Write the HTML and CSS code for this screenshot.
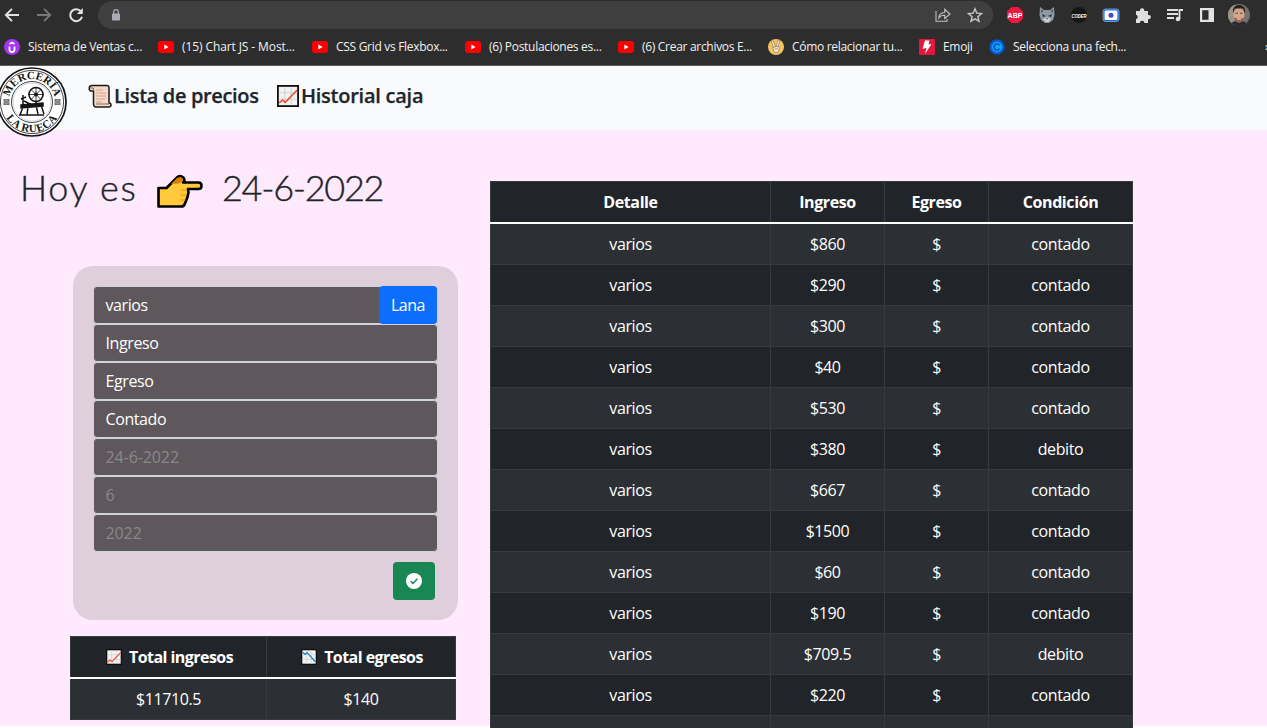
FILE: index.html
```
<!DOCTYPE html>
<html lang="es">
<head>
<meta charset="utf-8">
<title>Mercería La Rueca</title>
<link rel="stylesheet" href="styles.css">
</head>
<body>
<svg class="defs" width="0" height="0">
  <symbol id="yt" viewBox="0 0 16 16"><rect y="2" width="16" height="12" rx="3" fill="#f00"/><path d="M6.3 5.6v4.8L10.6 8z" fill="#fff"/></symbol>
  <symbol id="chart-up" viewBox="0 0 24 24"><rect x="1" y="1" width="22" height="22" fill="#f3f3f3" stroke="#111" stroke-width="2"/><path d="M8.5 2v20M15.5 2v20M2 8.5h20M2 15.5h20" stroke="#d3d3d3" stroke-width="1.2"/><path d="M2.500 19.500l3.500-3 3 2.500L22 5.500" fill="none" stroke="#ee5133" stroke-width="1.800"/></symbol>
  <symbol id="chart-down" viewBox="0 0 24 24"><rect x="1" y="1" width="22" height="22" fill="#f3f3f3" stroke="#111" stroke-width="2"/><path d="M8.5 2v20M15.5 2v20M2 8.5h20M2 15.5h20" stroke="#d3d3d3" stroke-width="1.2"/><path d="M2.500 5l3.500 3 3-2.500L22 19.500" fill="none" stroke="#1684d8" stroke-width="1.900"/></symbol>
</svg>
<header class="browser">
  <div class="toolbar">
    <svg class="nav-icon" viewBox="0 0 16 16"><path d="M15 8H2M8 1.800L1.800 8 8 14.200" fill="none" stroke="#e2e3e5" stroke-width="1.900"/></svg>
    <svg class="nav-icon" viewBox="0 0 16 16"><path d="M1 8h13M8 1.800L14.200 8 8 14.200" fill="none" stroke="#77787a" stroke-width="1.900"/></svg>
    <svg class="nav-icon" viewBox="0 0 16 16"><path d="M13 4.500A6 6 0 1 0 14 9.800" fill="none" stroke="#e2e3e5" stroke-width="2"/><path d="M14.800 1v6H8.800z" fill="#e2e3e5"/></svg>
    <div class="address">
      <svg width="10" height="12" viewBox="0 0 10 12"><rect x="1" y="4.500" width="8" height="7" rx=".8" fill="#a9adb3"/><path d="M2.700 5V3a2.300 2.300 0 0 1 4.600 0v2" fill="none" stroke="#a9adb3" stroke-width="1.200"/></svg>
      <span class="grow"></span>
      <svg width="16" height="16" viewBox="0 0 16 16" fill="none" stroke="#bfc1c3" stroke-width="1.100"><path d="M1 4v10.300h11V12M3.800 11C4 7.500 6 5.700 9.700 5.500V2.300L15 7l-5.300 4.500V8.300C7 8.200 5.200 9 3.800 11z"/></svg>
      <svg width="16" height="16" viewBox="0 0 16 16" fill="none" stroke="#c6c8ca" stroke-width="1.400"><path d="M8 1.800l1.800 4.400 4.700.4-3.600 3.100 1.100 4.600L8 11.800l-4 2.500 1.100-4.600L1.500 6.600l4.700-.4z"/></svg>
    </div>
    <div class="extensions">
      <svg width="18" height="18" viewBox="0 0 18 18"><path d="M5.500 1h7L17 5.500v7L12.500 17h-7L1 12.500v-7z" fill="#ed1740"/><text x="9" y="11.800" class="abp">ABP</text></svg>
      <svg width="18" height="18" viewBox="0 0 18 18"><path d="M2 1l4 3h6l4-3 .5 8-1.500 5-4 3H7l-4-3-1.500-5z" fill="#8d9aa2"/><path d="M3 3l2.500 2L3 7M15 3l-2.500 2L15 7" fill="#4e626c"/><path d="M4 8l4 2-3 1zM14 8l-4 2 3 1z" fill="#293035"/><path d="M5 13l4-2 4 2-2.500 3h-3z" fill="#cad0d3"/><path d="M8 12h2l-1 1.500z" fill="#30383c"/></svg>
      <svg class="coder-icon" width="18" height="18" viewBox="0 0 18 18"><circle cx="9" cy="9" r="8" fill="#171717"/><text x="1.500" y="11.500" class="coder" textLength="15" lengthAdjust="spacingAndGlyphs">CODER</text></svg>
      <svg width="18" height="18" viewBox="0 0 18 18"><rect x="1.800" y="3.700" width="14.400" height="11" rx="2" fill="#fff" stroke="#1666e0" stroke-width="1.500"/><rect x="1" y="3" width="16" height="12.500" rx="2.500" fill="none" stroke="#a9d0ff" stroke-width=".6"/><circle cx="9" cy="9.200" r="2.500" fill="#4c45c5"/></svg>
      <svg width="18" height="18" viewBox="0 0 18 18"><path d="M2 5h4a2.200 2.200 0 1 1 4.200 0H14v4a2.200 2.200 0 1 1 0 4.200V17h-3.600a2.300 2.300 0 0 0-4.600 0H2v-3.900a2.200 2.200 0 0 0 0-4.300z" fill="#dedfe1"/></svg>
      <svg width="18" height="18" viewBox="0 0 18 18"><path d="M1 4h11M1 8h11M1 12h7M17 4h-3.500v9" stroke="#dedfe1" stroke-width="1.800" fill="none"/><circle cx="12" cy="13" r="2.300" fill="#dedfe1"/></svg>
      <svg width="18" height="18" viewBox="0 0 18 18"><path d="M2 2h14v14H2zM4.200 4.200v9.600h6.300V4.200z" fill="#e3e3e3" fill-rule="evenodd"/></svg>
      <svg class="avatar" width="22" height="22" viewBox="0 0 22 22"><defs><clipPath id="av"><circle cx="11" cy="11" r="11"/></clipPath></defs><g clip-path="url(#av)"><path d="M0 0h22v22H0z" fill="#75706a"/><path d="M0 0h7v22H0z" fill="#9b9489"/><path d="M3 22c0-5 4-5 8-5s8 1 9 5z" fill="#272938"/><ellipse cx="11" cy="11" rx="5.500" ry="7.500" fill="#d3a58e"/><path d="M5 9c-1-6 3-8 6-8s7 2 6 8l-2-4.500H7z" fill="#2a211e"/><path d="M7.500 9.300h2.500M12 9.300h2.500" stroke="#6b4437" stroke-width="1"/><path d="M6 13.500l3 1h4l3-1c-.5 3.500-2 5-5 5s-4.500-1.500-5-5z" fill="#8d6451"/><path d="M9 15.200h4" stroke="#f0d3c6"/></g></svg>
    </div>
  </div>
  <nav class="bookmarks">
    <a class="bm bm-a"><svg viewBox="0 0 16 16"><circle cx="8" cy="8" r="8" fill="#a435f0"/><path d="M5.500 7.500v3a2.500 2.500 0 0 0 5 0v-3M5.500 5L8 3.500 10.500 5" fill="none" stroke="#fff" stroke-width="1.800"/></svg><span>Sistema de Ventas c...</span></a>
    <a class="bm bm-b"><svg><use href="#yt"/></svg><span>(15) Chart JS - Most...</span></a>
    <a class="bm bm-c"><svg><use href="#yt"/></svg><span>CSS Grid vs Flexbox...</span></a>
    <a class="bm bm-d"><svg><use href="#yt"/></svg><span>(6) Postulaciones es...</span></a>
    <a class="bm bm-e"><svg><use href="#yt"/></svg><span>(6) Crear archivos E...</span></a>
    <a class="bm bm-f"><svg viewBox="0 0 16 16"><circle cx="8" cy="8" r="8" fill="#f2c45c"/><path d="M4.700 3l1.800 5M10.500 2.500L9 8" stroke="#8b6c53" stroke-width="2.600" stroke-linecap="round"/><path d="M4.700 3l1.800 5M10.500 2.500L9 8" stroke="#f6e0c7" stroke-width="1.600" stroke-linecap="round"/><path d="M4.500 8.500l6-1.500 1 2-1.500 4.500H6.500z" fill="#f6e0c7" stroke="#8b6c53" stroke-width=".6"/><path d="M7 10l3-1" stroke="#8b6c53" stroke-width=".6"/></svg><span>Cómo relacionar tu...</span></a>
    <a class="bm bm-g"><svg viewBox="0 0 16 16"><rect width="16" height="16" rx="1" fill="#e1193f"/><path d="M6 1.500h4.500L9.500 5.500l3-.5L6 15l1.500-6-4 .8z" fill="#fff"/></svg><span>Emoji</span></a>
    <a class="bm bm-h"><svg viewBox="0 0 16 16"><circle cx="8" cy="8" r="7.200" fill="#0a67e8" stroke="#084fab" stroke-width="1.400" stroke-dasharray="3 1"/><circle cx="8" cy="8" r="5" fill="#0ba7f5"/><path d="M10.500 6.200a3 3 0 1 0 0 3.600" stroke="#084bc3" stroke-width="1.600" fill="none"/></svg><span>Selecciona una fech...</span></a>
    <span class="more">»</span>
  </nav>
</header>
<nav class="navbar">
  <svg class="logo" viewBox="0 0 70 70">
    <defs><path id="arc-top" d="M12 35a23 23 0 0 1 46 0"/><path id="arc-bottom" d="M4.800 35a30.200 30.200 0 0 0 60.400 0"/></defs>
    <circle cx="35" cy="35" r="34" fill="#fff" stroke="#151515" stroke-width="1.700"/><circle cx="35" cy="35" r="31.600" fill="none" stroke="#151515" stroke-width=".8"/><circle cx="35" cy="35" r="20.500" fill="none" stroke="#151515" stroke-width=".8"/><circle cx="35" cy="35" r="19" fill="none" stroke="#999" stroke-width=".4"/>
    <text class="logo-text top"><textPath href="#arc-top" startOffset="50%">MERCERÍA</textPath></text>
    <text class="logo-text bottom"><textPath href="#arc-bottom" startOffset="50%">LA RUECA</textPath></text>
    <g fill="#aaa" stroke="#555" stroke-width=".7"><path d="M7 32.500h5v5H7zM58 32.500h5v5h-5z"/><path d="M6.500 32l6 6M12.500 32l-6 6M57.500 32l6 6M63.500 32l-6 6"/></g>
    <circle cx="39" cy="27.500" r="7" fill="none" stroke="#151515" stroke-width="1.600"/><circle cx="39" cy="27.500" r="2" fill="#151515"/><path d="M39 20v15M31.500 27.500h15M34 22.500l10 10M44 22.500l-10 10" stroke="#151515" stroke-width=".8"/>
    <path d="M24 38l22-2v3l-22 2zM26 40l-3 8M44 38l3 9M31 39l-1 9M39 38l2 9M22 48h25M26 28v11M24 32l5-2M27 34l8 4M39 34v5" fill="#151515" stroke="#151515" stroke-width="1.500"/>
  </svg>
  <a class="nav-link link-a"><svg viewBox="0 0 24 24"><path d="M4 1.500h15c2.500 0 2 3 2 4V19c1.500 0 2 .5 2 2s-1 2-2.500 2H8c-2 0-2.500-1.500-2.500-3.500V7H2.500C.5 6 .5 1.500 4 1.500z" fill="#f5d8c5" stroke="#1a1a1a" stroke-width="1.500"/><path d="M2 4h3.500v3M8 20h13" fill="none" stroke="#8d6b5c"/><path d="M8 6h7M8 9h10M8 12h10M8 15h9M8 18h6" stroke="#d2a58d" stroke-width="1.100"/></svg><span>Lista de precios</span></a>
  <a class="nav-link link-b"><svg class="chart"><use href="#chart-up"/></svg><span>Historial caja</span></a>
</nav>
<main class="page">
  <section class="left">
    <h1 class="today"><span class="today-a">Hoy es</span><svg viewBox="0 0 46 34"><path d="M1.500 14h8L20 3.500c2.500-2.500 7-1.500 7.500 3L26 8.500h15.500c4 0 4 6.500 0 6.500H31l.5 3.500-1 4.500-1.500 4-1.500 3.500c-.5 1.500-2 2-3.500 2H1.500z" fill="#ffc83d" stroke="#000" stroke-width="2.600" stroke-linejoin="round"/><path d="M14 10l6-6c3-2 6 0 5.500 3L22 9.500z" fill="#d67d00"/><path d="M24 16h6M23.500 21h6M23.500 26h5" stroke="#e79500" stroke-width="1.200"/></svg><span class="today-b">24-6-2022</span></h1>
    <form class="card">
      <div class="field first"><span>varios</span><button type="button" class="wool">Lana</button></div>
      <div class="field">Ingreso</div>
      <div class="field">Egreso</div>
      <div class="field">Contado</div>
      <div class="field off">24-6-2022</div>
      <div class="field off">6</div>
      <div class="field off">2022</div>
      <button type="button" class="save" aria-label="Guardar"><svg width="16" height="16" viewBox="0 0 16 16"><circle cx="8" cy="8" r="8" fill="#fff"/><path d="M4.700 8.200l2.300 2.200 4.400-4.600" fill="none" stroke="#198754" stroke-width="1.500"/></svg></button>
    </form>
    <div class="grid totals">
      <div class="row head"><b><svg><use href="#chart-up"/></svg>Total ingresos</b><b><svg><use href="#chart-down"/></svg>Total egresos</b></div>
      <div class="row"><span>$11710.5</span><span>$140</span></div>
    </div>
  </section>
  <section class="grid sales">
    <div class="row head"><b>Detalle</b><b>Ingreso</b><b>Egreso</b><b>Condición</b></div>
    <div class="row"><span>varios</span><span>$860</span><span>$</span><span>contado</span></div>
    <div class="row"><span>varios</span><span>$290</span><span>$</span><span>contado</span></div>
    <div class="row"><span>varios</span><span>$300</span><span>$</span><span>contado</span></div>
    <div class="row"><span>varios</span><span>$40</span><span>$</span><span>contado</span></div>
    <div class="row"><span>varios</span><span>$530</span><span>$</span><span>contado</span></div>
    <div class="row"><span>varios</span><span>$380</span><span>$</span><span>debito</span></div>
    <div class="row"><span>varios</span><span>$667</span><span>$</span><span>contado</span></div>
    <div class="row"><span>varios</span><span>$1500</span><span>$</span><span>contado</span></div>
    <div class="row"><span>varios</span><span>$60</span><span>$</span><span>contado</span></div>
    <div class="row"><span>varios</span><span>$190</span><span>$</span><span>contado</span></div>
    <div class="row"><span>varios</span><span>$709.5</span><span>$</span><span>debito</span></div>
    <div class="row"><span>varios</span><span>$220</span><span>$</span><span>contado</span></div>
    <div class="row"><span></span><span></span><span></span><span></span></div>
  </section>
</main>
</body>
</html>
```
FILE: styles.css
```
* { box-sizing: border-box; }
html, body { height: 728px; overflow: hidden; }
body { margin: 0; background: #fff; color: #212529; font: 16px/24px "Open Sans", "Noto Sans", sans-serif; letter-spacing: -.4px; }
.defs { display: block; }
svg { flex: none; }

.browser { height: 66px; background: #2d2d2d; border-bottom: 1px solid #5d5d5d; overflow: hidden; }
.toolbar { display: flex; align-items: center; height: 30px; padding-left: 4px; }
.nav-icon { width: 16px; height: 16px; margin-right: 16px; }
.address { display: flex; align-items: center; gap: 16px; width: 895px; height: 28px; margin-left: -2px; padding: 0 10px 0 13px; border-radius: 14px; background: #3f3f3f; }
.grow { flex: 1; }
.extensions { display: flex; align-items: center; gap: 14px; padding-left: 15px; margin-left: -2px; }
.avatar { margin-left: -2px; }
.abp { font: bold 7px "Liberation Sans", sans-serif; fill: #fff; text-anchor: middle; letter-spacing: 0; }
.coder-icon { overflow: visible; }
.coder { font: italic bold 6px "Liberation Sans", sans-serif; fill: #fff; letter-spacing: 0; }

.bookmarks { display: flex; align-items: center; height: 34px; padding-left: 4px; color: #f1f1f1; font-size: 12px; line-height: 16px; letter-spacing: -.3px; white-space: nowrap; }
.bm { display: flex; flex: none; align-items: center; gap: 8px; }
.bm svg { width: 16px; height: 16px; }
.bm-a { width: 154px; }
.bm-b { width: 154px; letter-spacing: -.1px; }
.bm-c { width: 153px; }
.bm-d { width: 153px; }
.bm-e { width: 150px; }
.bm-f { width: 151px; }
.bm-g { width: 70px; letter-spacing: -.3px; }
.bm-h { width: 276px; }

.navbar { display: flex; height: 64px; background: #f8fafc; font-size: 20px; font-weight: 600; line-height: 30px; letter-spacing: -.35px; -webkit-text-stroke: .25px #212529; }
.logo { width: 70px; height: 70px; margin: 1px 0 -7px -3px; position: relative; -webkit-text-stroke: 0; }
.logo-text { font: bold 11px "Liberation Serif", serif; fill: #151515; text-anchor: middle; }
.logo-text.top { letter-spacing: .1px; }
.logo-text.bottom { letter-spacing: .6px; }
.nav-link { display: flex; align-items: center; height: 60px; gap: 2px; }
.nav-link svg { width: 24px; height: 24px; }
.nav-link .chart { width: 22px; height: 22px; }
.link-a { width: 189px; margin-left: 21px; }
.link-b { letter-spacing: -.25px; }

.page { display: flex; align-items: flex-start; height: 596px; background: #ffe9fc; }
.left { width: 490px; }
.today { display: flex; align-items: center; height: 52px; margin: 32px 0 0 20px; font: 300 36px/52px Lato, "Open Sans", sans-serif; white-space: nowrap; }
.today svg { width: 46px; height: 34px; margin: 5px 19px 0 0; }
.today span { padding-bottom: 3px; -webkit-text-stroke: .4px #212529; }
.today-a { width: 137px; letter-spacing: 1.700px; }
.today-b { letter-spacing: -1.300px; }
.card { width: 385px; height: 354px; margin: 52px 0 0 73px; padding: 20px; border-radius: 20px; background: #dfcedc; }
.field { display: flex; align-items: center; height: 38px; padding: 0 0 0 11.500px; border: 1px solid #ced4da; border-radius: 4px; background: #5e575b; color: #fff; }
.field.first { justify-content: space-between; }
.off { color: #8a888a; letter-spacing: -.1px; }
.wool { width: 58px; height: 38px; border: 0; border-radius: 4px; background: #0d6efd; color: #fff; font: inherit; letter-spacing: -.5px; padding: 0; }
.save { display: flex; align-items: center; justify-content: center; width: 42px; height: 38px; margin: 10px 3px 0 auto; padding: 0; border: 0; border-radius: 4px; background: #198754; }

.grid { border: 0 solid #373b3e; color: #fff; text-align: center; }
.row { display: grid; grid-template-columns: var(--cols); height: 41px; border-bottom: 1px solid #373b3e; background: #212529; }
.row:nth-child(even) { background: #2c3034; }
.row > * { display: flex; align-items: center; justify-content: center; border-left: 1px solid #373b3e; }
.row > :last-child { border-right: 1px solid #373b3e; }
.row.head { height: 43px; border-top: 1px solid #373b3e; border-bottom: 2px solid #fff; }
.totals { --cols: 196px 190px; width: 386px; margin: 16px 0 0 70px; }
.totals svg { width: 16px; height: 16px; margin-right: 7px; }
.totals b { padding-left: 2px; letter-spacing: -.55px; }
.sales { --cols: 280px 114px 104px 145px; width: 643px; margin-top: 51px; }
```
